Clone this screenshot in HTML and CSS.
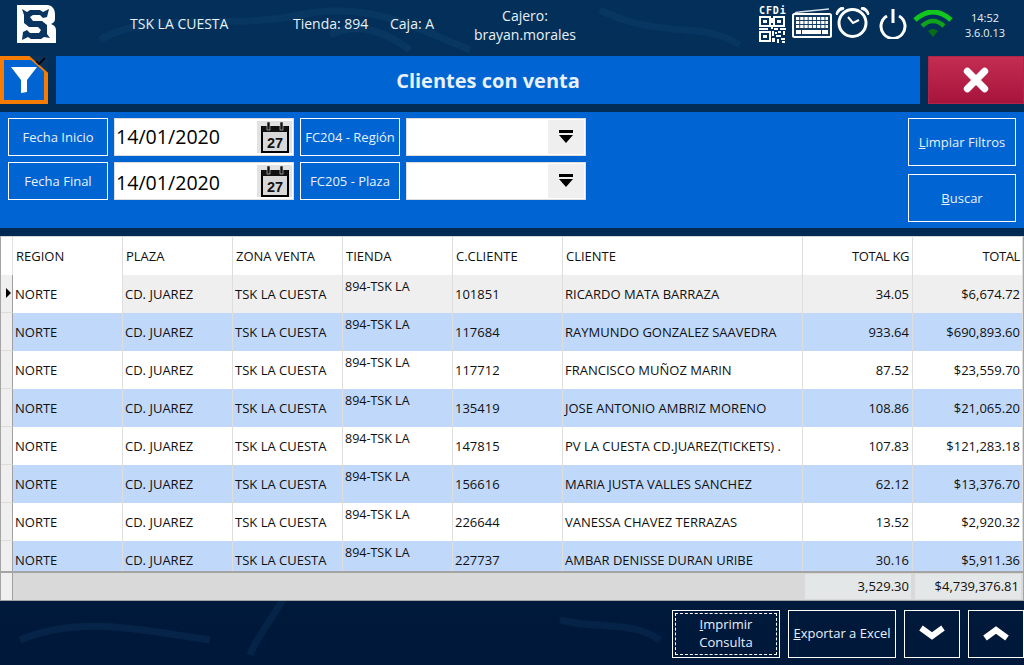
FILE: index.html
```html
<!DOCTYPE html>
<html lang="es">
<head>
<meta charset="utf-8">
<title>Clientes con venta</title>
<link rel="stylesheet" href="styles.css">
</head>
<body>
<div class="app">
  <svg class="bg-art" viewBox="0 0 1024 665" aria-hidden="true">
    <g fill="none" stroke="#2a6c9c" stroke-width="7" opacity=".13">
      <path d="M100 40C150 10 230 30 300 15S420 30 470 50"/>
      <path d="M330 35c30-15 60 0 80 15"/>
      <path d="M600 10c60 30 100 10 140 35"/>
      <path d="M20 640c60-25 120-10 190 0"/>
      <path d="M250 655c10-25 30-45 40-70"/>
      <path d="M560 620c40 10 70 0 100 20"/>
    </g>
  </svg>
  <header class="top">
    <svg class="logo" viewBox="0 0 40 40" role="img" aria-label="Logo">
      <path fill="#fff" d="M1 1H31C36 1 39 5 39 10V15C39 18 37 19 35 20C38 21 40 23 40 26V39H1Z"/>
      <path fill="#0a3560" d="M6 5L11 8L14 6L24 6L27 8L33 5L31 13L27 14L24 11H17L14 13L17 17H26L31 21L31 30L34 34L28 33L25 35L15 35L12 33L6 36L7 28L11 26L14 29H23L25 26L22 23H13L8 19L8 11Z"/>
    </svg>
    <span class="top-store">TSK LA CUESTA</span>
    <span class="top-tienda">Tienda: 894</span>
    <span class="top-caja">Caja: A</span>
    <span class="top-cajero">Cajero:<br>brayan.morales</span>
    <div class="top-icons">
      <div class="cfdi">
        <span class="cfdi-text">CFDi</span>
        <svg class="qr" viewBox="0 0 27 27" aria-hidden="true">
          <g fill="none" stroke="#fff" stroke-width="2">
            <rect x="1" y="1" width="10" height="9"/><rect x="15" y="1" width="10" height="9"/><rect x="1" y="16" width="10" height="9"/>
          </g>
          <g fill="#fff">
            <rect x="4" y="4" width="4" height="3"/><rect x="18" y="4" width="4" height="3"/><rect x="4" y="19" width="4" height="3"/>
            <rect x="12" y="2" width="2" height="5"/><rect x="12" y="9" width="2" height="4"/><rect x="0" y="12" width="9" height="2"/>
            <rect x="15" y="12" width="4" height="2"/><rect x="21" y="12" width="6" height="2"/><rect x="13" y="15" width="2" height="5"/>
            <rect x="16" y="16" width="2" height="2"/><rect x="19" y="15" width="3" height="2"/><rect x="24" y="15" width="2" height="4"/>
            <rect x="17" y="19" width="5" height="2"/><rect x="13" y="22" width="3" height="4"/><rect x="18" y="23" width="2" height="4"/><rect x="22" y="22" width="4" height="2"/><rect x="23" y="25" width="3" height="2"/>
          </g>
        </svg>
      </div>
      <svg class="ic-keyboard" viewBox="0 0 40 30" aria-hidden="true">
        <path d="M2 7Q3 4 7 4L37 1" fill="none" stroke="#d5dde4" stroke-width="1.3"/>
        <rect x="1" y="6" width="38" height="23" rx="1.5" fill="#123a60" stroke="#fff" stroke-width="2"/>
        <path d="M4 10.500h32M4 14.500h32M4 18.500h32" stroke="#fff" stroke-width="3.200" stroke-dasharray="3.300 .9" fill="none"/>
        <path d="M4 24h5M10 24h19M30 24h6" stroke="#fff" stroke-width="4" fill="none"/>
      </svg>
      <svg class="ic-clock" viewBox="0 0 35 32" aria-hidden="true">
        <circle cx="17.500" cy="16" r="13.500" fill="none" stroke="#fff" stroke-width="3"/>
        <path d="M13 10L18 16L24 13" fill="none" stroke="#fff" stroke-width="2"/>
        <path d="M1 7Q2 1 8 0L9 2Q4 3 2 8ZM34 7Q33 1 27 0L26 2Q31 3 33 8Z" fill="#fff" stroke="#fff" stroke-width="1"/>
      </svg>
      <svg class="ic-power" viewBox="0 0 28 30" aria-hidden="true">
        <path d="M8 7A12 12 0 1 0 20 7" fill="none" stroke="#fff" stroke-width="3"/>
        <path d="M14 0V14" stroke="#fff" stroke-width="3"/>
      </svg>
      <svg class="ic-wifi" viewBox="0 0 40 28" aria-hidden="true">
        <path d="M2 10Q20-6 38 10" fill="none" stroke="#12c81e" stroke-width="5"/>
        <path d="M9 16Q20 6 31 16" fill="none" stroke="#0fa31c" stroke-width="4.500"/>
        <path d="M15 21Q20 17 25 21L20 27Z" fill="#0a6b1a"/>
      </svg>
      <span class="top-clock">14:52<br>3.6.0.13</span>
    </div>
  </header>

  <div class="title-row">
    <button class="filter-btn" type="button" aria-label="Filtro">
      <svg class="funnel" viewBox="0 0 27 27" aria-hidden="true"><path fill="#fff" d="M0 0H26L16 13V25L10 26V13Z"/></svg>
      <svg class="corner" viewBox="0 0 20 18" aria-hidden="true">
        <path d="M0 0H20V18Z" fill="#0c3158"/>
        <path d="M0 0L20 18" stroke="#f57c00" stroke-width="2" fill="none"/>
        <path d="M8 5L11 8L17 2" fill="none" stroke="#000" stroke-width="1.600"/>
      </svg>
    </button>
    <h1 class="title">Clientes con venta</h1>
    <button class="close-btn" type="button" aria-label="Cerrar">
      <svg viewBox="0 0 24 24" aria-hidden="true"><path d="M4 4L20 20M20 4L4 20" stroke="#fff" stroke-width="6.500" stroke-linecap="round"/></svg>
    </button>
  </div>

  <section class="filters">
    <div class="filter-grid">
      <div class="label">Fecha Inicio</div>
      <div class="input">
        <span class="date">14/01/2020</span>
        <span class="cal-box"><svg class="cal" viewBox="0 0 30 32"><use href="#calendar"/></svg></span>
      </div>
      <div class="label">FC204 - Región</div>
      <div class="input combo"><span class="combo-btn"><svg viewBox="0 0 16 16"><use href="#dropdown"/></svg></span></div>
      <div class="label">Fecha Final</div>
      <div class="input">
        <span class="date low">14/01/2020</span>
        <span class="cal-box"><svg class="cal" viewBox="0 0 30 32"><use href="#calendar"/></svg></span>
      </div>
      <div class="label">FC205 - Plaza</div>
      <div class="input combo"><span class="combo-btn"><svg viewBox="0 0 16 16"><use href="#dropdown"/></svg></span></div>
    </div>
    <div class="filter-actions">
      <button class="action" type="button"><u>L</u>impiar Filtros</button>
      <button class="action" type="button"><u>B</u>uscar</button>
    </div>
  </section>

  <section class="grid-wrap">
    <div class="grid">
      <div class="rh"></div><div class="c h">REGION</div><div class="c h">PLAZA</div><div class="c h">ZONA VENTA</div><div class="c h">TIENDA</div><div class="c h">C.CLIENTE</div><div class="c h">CLIENTE</div><div class="c h r">TOTAL KG</div><div class="c h r">TOTAL</div>

      <div class="rh cur"><span class="arrow"></span></div><div class="c">NORTE</div><div class="c sel">CD. JUAREZ</div><div class="c sel">TSK LA CUESTA</div><div class="c sel t">894-TSK LA</div><div class="c sel">101851</div><div class="c sel">RICARDO MATA BARRAZA</div><div class="c sel r">34.05</div><div class="c sel r">$6,674.72</div>

      <div class="rh"></div><div class="c b">NORTE</div><div class="c b">CD. JUAREZ</div><div class="c b">TSK LA CUESTA</div><div class="c b t">894-TSK LA</div><div class="c b">117684</div><div class="c b">RAYMUNDO GONZALEZ SAAVEDRA</div><div class="c b r">933.64</div><div class="c b r">$690,893.60</div>

      <div class="rh"></div><div class="c">NORTE</div><div class="c">CD. JUAREZ</div><div class="c">TSK LA CUESTA</div><div class="c t">894-TSK LA</div><div class="c">117712</div><div class="c">FRANCISCO MUÑOZ MARIN</div><div class="c r">87.52</div><div class="c r">$23,559.70</div>

      <div class="rh"></div><div class="c b">NORTE</div><div class="c b">CD. JUAREZ</div><div class="c b">TSK LA CUESTA</div><div class="c b t">894-TSK LA</div><div class="c b">135419</div><div class="c b">JOSE ANTONIO AMBRIZ MORENO</div><div class="c b r">108.86</div><div class="c b r">$21,065.20</div>

      <div class="rh"></div><div class="c">NORTE</div><div class="c">CD. JUAREZ</div><div class="c">TSK LA CUESTA</div><div class="c t">894-TSK LA</div><div class="c">147815</div><div class="c">PV LA CUESTA CD.JUAREZ(TICKETS) .</div><div class="c r">107.83</div><div class="c r">$121,283.18</div>

      <div class="rh"></div><div class="c b">NORTE</div><div class="c b">CD. JUAREZ</div><div class="c b">TSK LA CUESTA</div><div class="c b t">894-TSK LA</div><div class="c b">156616</div><div class="c b">MARIA JUSTA VALLES SANCHEZ</div><div class="c b r">62.12</div><div class="c b r">$13,376.70</div>

      <div class="rh"></div><div class="c">NORTE</div><div class="c">CD. JUAREZ</div><div class="c">TSK LA CUESTA</div><div class="c t">894-TSK LA</div><div class="c">226644</div><div class="c">VANESSA CHAVEZ TERRAZAS</div><div class="c r">13.52</div><div class="c r">$2,920.32</div>

      <div class="rh"></div><div class="c b">NORTE</div><div class="c b">CD. JUAREZ</div><div class="c b">TSK LA CUESTA</div><div class="c b t">894-TSK LA</div><div class="c b">227737</div><div class="c b">AMBAR DENISSE DURAN URIBE</div><div class="c b r">30.16</div><div class="c b r">$5,911.36</div>
    </div>
    <div class="summary">
      <div class="sum-rh"></div>
      <div class="sum-fill"></div>
      <div class="sum-val">3,529.30</div>
      <div class="sum-val">$4,739,376.81</div>
    </div>
  </section>

  <footer class="bottom">
    <button class="foot focus" type="button"><span class="focus-ring"><span><u>I</u>mprimir</span><span>Consulta</span></span></button>
    <button class="foot" type="button"><span><u>E</u>xportar a Excel</span></button>
    <button class="foot small" type="button" aria-label="Abajo"><svg viewBox="0 0 26 16"><path d="M2 3L13 11L24 3" fill="none" stroke="#fff" stroke-width="6"/></svg></button>
    <button class="foot small" type="button" aria-label="Arriba"><svg viewBox="0 0 26 16"><path d="M2 13L13 5L24 13" fill="none" stroke="#fff" stroke-width="6"/></svg></button>
  </footer>
</div>

<svg class="defs" aria-hidden="true">
  <defs>
    <g id="calendar">
      <rect x="2" y="6" width="26" height="25" fill="#d8d8d8" stroke="#000" stroke-width="2"/>
      <rect x="2" y="5" width="26" height="6" fill="#111"/>
      <rect x="7" y="1" width="3" height="8" fill="#111" stroke="#ddd" stroke-width=".6"/>
      <rect x="20" y="1" width="3" height="8" fill="#111" stroke="#ddd" stroke-width=".6"/>
      <text x="15" y="26.500" class="cal-num">27</text>
    </g>
    <g id="dropdown">
      <rect x="1" y="1" width="14" height="3" fill="#000"/>
      <path d="M1 6H15L8 14Z" fill="#000"/>
    </g>
  </defs>
</svg>
</body>
</html>
```

FILE: styles.css
```css
* { box-sizing: border-box; }
html, body { margin: 0; padding: 0; }
body { font-family: "Open Sans", "Noto Sans", "Liberation Sans", sans-serif; background: #00183a; overflow: hidden; }
button { font: inherit; cursor: pointer; }

.app {
  position: relative;
  width: 1024px;
  height: 665px;
  overflow: hidden;
  display: flex;
  flex-direction: column;
  background: linear-gradient(180deg, #03305a 0%, #012a52 35%, #001a3c 90%, #00183a 100%);
}
.bg-art { position: absolute; inset: 0; width: 100%; height: 100%; }
.defs { width: 0; height: 0; position: absolute; }

.top {
  position: relative;
  height: 56px;
  display: flex;
  align-items: center;
  color: #e8f1f8;
  font-size: 14px;
}
.logo { width: 40px; height: 40px; margin-left: 16px; margin-top: -8px; flex: none; }
.top-store { margin-left: 74px; width: 163px; margin-top: -10px; flex: none; }
.top-tienda { width: 97px; margin-top: -10px; flex: none; }
.top-caja { width: 50px; margin-top: -10px; flex: none; }
.top-cajero { width: 130px; margin-left: 20px; text-align: center; line-height: 19px; margin-top: -7px; flex: none; }
.top-icons { display: flex; align-items: flex-start; margin-left: 169px; height: 56px; flex: none; position: relative; }
.cfdi { width: 27px; margin-top: 5px; display: flex; flex-direction: column; }
.cfdi-text { font: 700 10px/11px "DejaVu Sans Mono", monospace; color: #fff; letter-spacing: .9px; white-space: nowrap; }
.qr { width: 27px; height: 27px; display: block; }
.ic-keyboard { width: 40px; height: 30px; margin: 8px 0 0 6px; }
.ic-clock { width: 35px; height: 32px; margin: 7px 0 0 3px; }
.ic-power { width: 28px; height: 30px; margin: 9px 0 0 9px; }
.ic-wifi { width: 40px; height: 28px; margin: 10px 0 0 6px; }
.top-clock { width: 58px; margin: 10px 0 0 3px; font-size: 11px; line-height: 15px; text-align: center; color: #e8f1f8; }

.title-row { height: 48px; display: flex; gap: 8px; position: relative; }
.filter-btn {
  position: relative;
  width: 48px;
  border: 4px solid #f57c00;
  background: #0064d2;
  padding: 0;
  overflow: visible;
  flex: none;
}
.funnel { position: absolute; left: 7px; top: 7px; width: 27px; height: 27px; }
.corner { position: absolute; right: -4px; top: -4px; width: 20px; height: 18px; }
.title {
  flex: 1;
  margin: 0;
  background: #0064d2;
  color: #e8f1fb;
  font-size: 20px;
  font-weight: 700;
  line-height: 50px;
  height: 48px;
  text-align: center;
}
.close-btn {
  width: 96px;
  flex: none;
  border: 1px solid #b0244a;
  background: linear-gradient(180deg, #c42d52 0%, #a6143c 100%);
  display: flex;
  align-items: center;
  justify-content: center;
  padding: 0;
}
.close-btn svg { width: 26px; height: 26px; }

.filters {
  position: relative;
  margin-top: 8px;
  height: 116px;
  background: #0064d2;
  padding: 6px 8px;
  display: flex;
  justify-content: space-between;
}
.filter-grid {
  display: grid;
  grid-template-columns: 100px 180px 100px 180px;
  grid-auto-rows: 38px;
  gap: 6px;
}
.label {
  border: 1px solid #fff;
  color: #e8f1fb;
  font-size: 13px;
  display: flex;
  align-items: center;
  justify-content: center;
  white-space: nowrap;
}
.input {
  background: #fff;
  border: 1px solid #dcdcdc;
  display: flex;
  align-items: center;
  justify-content: space-between;
  padding: 1px;
}
.date { font-size: 19.6px; color: #000; margin-top: -2px; }
.date.low { margin-top: 2px; }
.cal-box { width: 35px; height: 32px; background: #e2e2e2; display: flex; align-items: center; justify-content: center; }
.cal { width: 30px; height: 32px; }
.cal-num { font: 700 14.5px "Liberation Sans", sans-serif; fill: #111; text-anchor: middle; }
.combo { justify-content: flex-end; }
.combo-btn { width: 36px; height: 34px; background: #efefef; display: flex; align-items: center; justify-content: center; }
.combo-btn svg { width: 16px; height: 16px; }

.filter-actions { display: flex; flex-direction: column; gap: 8px; }
.action {
  width: 108px;
  height: 48px;
  background: #0064d2;
  border: 1px solid #fff;
  color: #e8f1fb;
  font-size: 13px;
  padding: 0;
  white-space: nowrap;
}

.grid-wrap {
  position: relative;
  margin-top: 8px;
  height: 365px;
  background: #fff;
  border: 1px solid #a4a4a4;
  border-top: 1px solid #cfd4d8;
  display: flex;
  flex-direction: column;
  color: #101010;
  font-size: 13px;
}
.grid {
  height: 336px;
  overflow: hidden;
  display: grid;
  grid-template-columns: 12px 110px 110px 110px 110px 110px 240px 110px 110px;
  grid-auto-rows: 38px;
  border-bottom: 2px solid #a4a4a4;
}
.rh { background: #efefef; border-right: 1px solid #a0a0a0; border-bottom: 1px solid #dcdcdc; position: relative; }
.grid > .rh:first-child { background: #fff; border-bottom: 0; border-right: 1px solid #e0e0e0; }
.arrow { position: absolute; left: 5px; top: 13px; border-style: solid; border-width: 5px 0 5px 5px; border-color: transparent transparent transparent #000; }
.c {
  border-right: 1px solid #dedede;
  display: flex;
  align-items: center;
  padding-left: 2px;
  padding-right: 3px;
  background: #fff;
  white-space: nowrap;
  overflow: hidden;
}
.c.h { padding-left: 3px; }
.c.sel { background: #efefef; }
.c.b { background: #c0d9fb; }
.c.r { justify-content: flex-end; padding-right: 3px; }
.c.r:nth-child(9n) { padding-right: 2px; }
.c.h.r { letter-spacing: -.4px; }
.c.t { align-items: flex-start; padding-top: 3px; font-size: 12.5px; }

.summary { flex: 1; display: flex; background: #d9d9d9; }
.sum-rh { width: 12px; background: #efefef; border-right: 1px solid #a0a0a0; flex: none; }
.sum-fill { flex: 1; }
.sum-val {
  width: 106px;
  background: #e4e7e8;
  margin: 1px 0 1px 4px;
  text-align: right;
  padding-right: 2px;
  line-height: 25px;
  color: #101010;
}
.sum-val:last-child { margin-right: 2px; }

.bottom {
  position: relative;
  display: flex;
  justify-content: flex-end;
  gap: 8px;
  padding-top: 9px;
}
.foot {
  width: 108px;
  height: 48px;
  background: transparent;
  border: 1px solid #fff;
  color: #e8f1fb;
  font-size: 13px;
  padding: 0 0 2px;
  display: flex;
  align-items: center;
  justify-content: center;
  white-space: nowrap;
}
.foot.focus { padding: 2px; }
.focus-ring {
  width: 100%;
  height: 100%;
  border: 1px dashed #fff;
  display: flex;
  flex-direction: column;
  align-items: center;
  justify-content: center;
  line-height: 18px;
  padding-bottom: 2px;
}
.foot.small { width: 56px; }
.foot.small svg { width: 26px; height: 16px; }
```
